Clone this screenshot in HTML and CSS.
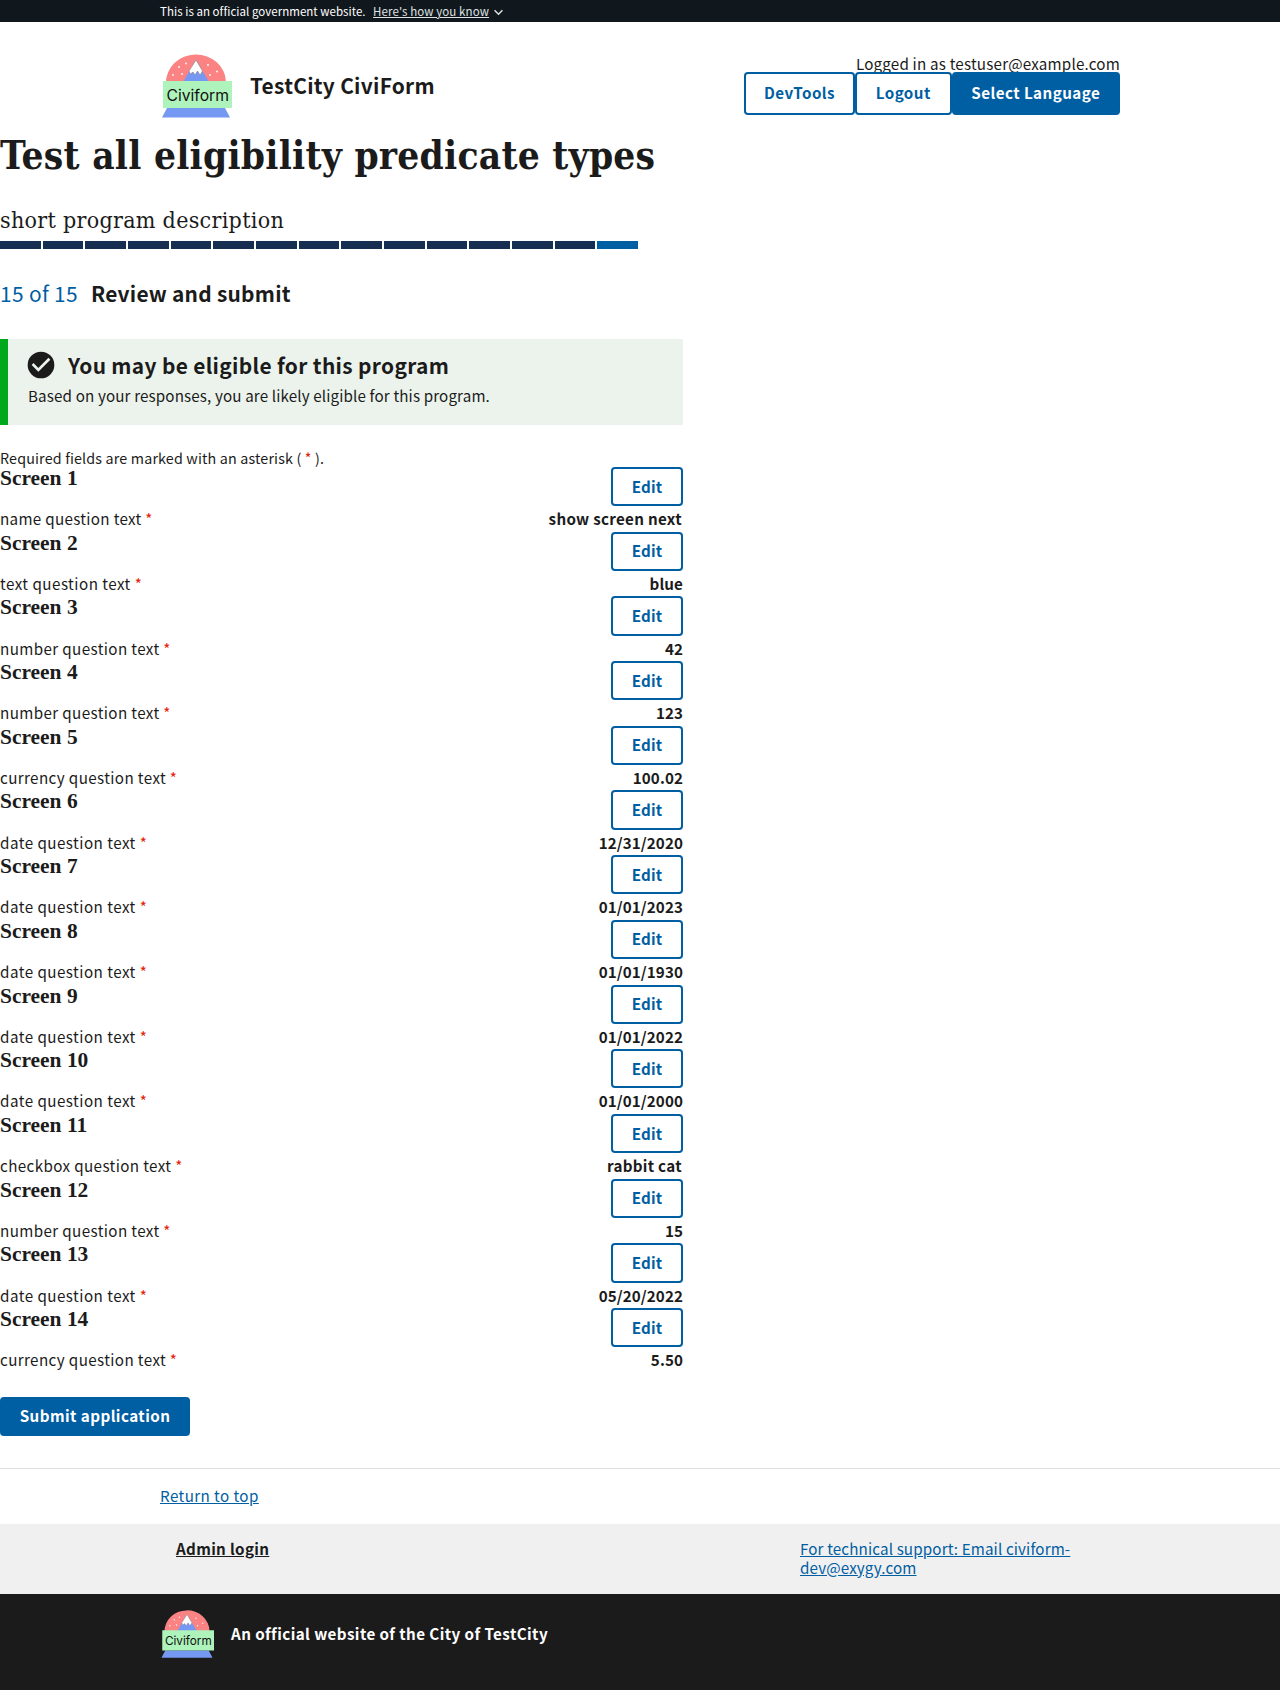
FILE: index.html
```html
<!DOCTYPE html>
<html lang="en">
<head>
<meta charset="utf-8">
<title>Test all eligibility predicate types</title>
<link rel="stylesheet" href="styles.css">
</head>
<body>
<svg width="0" height="0" class="defs" aria-hidden="true">
  <symbol id="logo" viewBox="0 0 72 64">
    <path d="M6 29a30 28 0 0 1 60-1v3H6z" fill="#fb8383"/>
    <path d="M23 28 36 6l13 22z" fill="#7598f2"/>
    <path d="M36 6l6.500 11-2.500 4-2.500-4-2.500 4-2-3-2.500 2-1.500-3z" fill="#fff" stroke="#777" stroke-width=".5"/>
    <g fill="#fff"><circle cx="13" cy="21" r=".9"/><circle cx="19" cy="13" r=".9"/><circle cx="26" cy="9.500" r=".9"/><circle cx="22" cy="20" r=".9"/><circle cx="48" cy="11" r=".9"/><circle cx="57" cy="17.500" r=".9"/><circle cx="50" cy="21" r=".9"/></g>
    <path d="M7 54h58l5 9.500H2z" fill="#7598f2"/>
    <path d="M3 27h69v27H3z" fill="#adf3bb"/>
    <text x="6.500" y="47.300" font-family="Inter, sans-serif" font-size="15.700" font-weight="400" fill="#111" textLength="62.500">Civiform</text>
  </symbol>
</svg>
<div class="banner"><div class="container banner-in"><span class="b1">This is an official government website.</span><a class="b2">Here's how you know</a><svg width="9" height="7" viewBox="0 0 8 6"><path d="M.5 1 4 4.500 7.500 1" fill="none" stroke="#dfe1e2" stroke-width="1.300"/></svg></div></div>
<header class="container header">
  <div class="brand"><svg class="logo" width="72" height="64"><use href="#logo"/></svg><span class="brand-name">TestCity CiviForm</span></div>
  <div class="account"><span class="user">Logged in as testuser@example.com</span>
    <div class="buttons"><a class="btn outline dev">DevTools</a><a class="btn outline out">Logout</a><a class="btn lang">Select Language</a></div></div>
</header>
<main>
  <h1>Test all eligibility predicate types</h1>
  <p class="desc">short program description</p>
  <div class="steps"><i></i><i></i><i></i><i></i><i></i><i></i><i></i><i></i><i></i><i></i><i></i><i></i><i></i><i></i><i class="current"></i></div>
  <h2><span class="count">15 of 15</span><span class="step-name">Review and submit</span></h2>
  <section class="alert">
    <div class="alert-head"><svg width="32" height="32" viewBox="0 0 24 24"><path d="M12 2a10 10 0 1 0 0 20 10 10 0 0 0 0-20zm-2 15-5-5 1.410-1.410L10 14.170l7.590-7.590L19 8z" fill="#1b1b1b"/></svg><span class="alert-title">You may be eligible for this program</span></div>
    <p>Based on your responses, you are likely eligible for this program.</p>
  </section>
  <p class="required">Required fields are marked with an asterisk ( <b class="star">*</b> ).</p>
  <div class="summary">
    <div class="item"><h3>Screen 1</h3><a class="btn outline edit">Edit</a><p class="snug">name question text <b class="star">*</b></p><strong class="words">show screen next</strong></div>
    <div class="item"><h3>Screen 2</h3><a class="btn outline edit">Edit</a><p class="loose">text question text <b class="star">*</b></p><strong>blue</strong></div>
    <div class="item"><h3>Screen 3</h3><a class="btn outline edit">Edit</a><p>number question text <b class="star">*</b></p><strong>42</strong></div>
    <div class="item"><h3>Screen 4</h3><a class="btn outline edit">Edit</a><p>number question text <b class="star">*</b></p><strong>123</strong></div>
    <div class="item"><h3>Screen 5</h3><a class="btn outline edit">Edit</a><p>currency question text <b class="star">*</b></p><strong>100.02</strong></div>
    <div class="item"><h3>Screen 6</h3><a class="btn outline edit">Edit</a><p class="loose">date question text <b class="star">*</b></p><strong>12/31/2020</strong></div>
    <div class="item"><h3>Screen 7</h3><a class="btn outline edit">Edit</a><p class="loose">date question text <b class="star">*</b></p><strong>01/01/2023</strong></div>
    <div class="item"><h3>Screen 8</h3><a class="btn outline edit">Edit</a><p class="loose">date question text <b class="star">*</b></p><strong>01/01/1930</strong></div>
    <div class="item"><h3>Screen 9</h3><a class="btn outline edit">Edit</a><p class="loose">date question text <b class="star">*</b></p><strong>01/01/2022</strong></div>
    <div class="item"><h3>Screen 10</h3><a class="btn outline edit">Edit</a><p class="loose">date question text <b class="star">*</b></p><strong>01/01/2000</strong></div>
    <div class="item"><h3>Screen 11</h3><a class="btn outline edit">Edit</a><p>checkbox question text <b class="star">*</b></p><strong class="words">rabbit cat</strong></div>
    <div class="item"><h3>Screen 12</h3><a class="btn outline edit">Edit</a><p>number question text <b class="star">*</b></p><strong>15</strong></div>
    <div class="item"><h3>Screen 13</h3><a class="btn outline edit">Edit</a><p class="loose">date question text <b class="star">*</b></p><strong>05/20/2022</strong></div>
    <div class="item"><h3>Screen 14</h3><a class="btn outline edit">Edit</a><p>currency question text <b class="star">*</b></p><strong>5.50</strong></div>
  </div>
  <a class="btn submit">Submit application</a>
</main>
<footer>
  <div class="return"><div class="container"><a>Return to top</a></div></div>
  <div class="links"><div class="container links-in"><a class="admin">Admin login</a><a class="support">For technical support: Email civiform-<br>dev@exygy.com</a></div></div>
  <div class="identity"><div class="container identity-in"><svg class="logo" width="54" height="48"><use href="#logo"/></svg><span>An official website of the City of TestCity</span></div></div>
</footer>
</body>
</html>
```
FILE: styles.css
```css
* { box-sizing: border-box; }
body { margin: 0; background: #fff; color: #1b1b1b; font: 15.200px/25.440px "Noto Sans CJK SC", "Open Sans", sans-serif; }
p, h1, h2, h3 { margin: 0; }
.defs { display: block; }
.container { width: 960px; margin: 0 auto; }
.banner { height: 22px; background: #11181d; color: #fff; font-size: 11.500px; line-height: 22px; letter-spacing: .04px; }
.banner-in { display: flex; align-items: center; }
.b2 { margin-left: 7.500px; color: #dfe1e2; text-decoration: underline; letter-spacing: .1px; }
.banner svg { margin-left: 5px; margin-top: 3px; }
.header { height: 111px; padding-top: 32px; display: flex; justify-content: space-between; }
.brand { display: flex; height: 64px; }
.brand-name { margin-left: 18px; font-size: 20.900px; font-weight: 700; line-height: 62px; letter-spacing: .27px; }
.account { display: flex; flex-direction: column; align-items: flex-end; }
.user { height: 18px; line-height: 19px; letter-spacing: .19px; }
.buttons { display: flex; position: relative; background: #fff; }
.btn { display: flex; align-items: center; justify-content: center; height: 39.260px; padding-bottom: 2px; border-radius: 4px; background: #005ea2; color: #fff; font-weight: 700; line-height: 16px; letter-spacing: .44px; white-space: nowrap; }
.buttons .btn { height: 43px; padding-bottom: 3px; }
.outline { background: #fff; box-shadow: inset 0 0 0 2px #005ea2; color: #005ea2; }
.dev { width: 111px; }
.out { width: 96.500px; }
.lang { width: 168.500px; }
h1 { font: 700 38.500px/46px "DejaVu Serif Condensed", "DejaVu Serif", serif; font-stretch: condensed; height: 64px; letter-spacing: .24px; white-space: nowrap; }
.desc { font: 23px/47px "DejaVu Serif Condensed", "DejaVu Serif", serif; font-stretch: condensed; height: 44px; letter-spacing: .3px; }
.steps { display: grid; grid-template-columns: repeat(15, 1fr); width: 640px; height: 8px; }
.steps i { background: #162e51; margin-right: 2px; }
.steps .current { background: #005ea2; }
h2 { display: flex; height: 90px; padding-top: 29px; font-size: 20.900px; line-height: 30px; letter-spacing: .25px; }
.count { width: 91px; font-weight: 400; color: #005ea2; letter-spacing: .34px; }
.alert { width: 683px; height: 86px; padding: 10px 0 0 17px; border-left: 8px solid #00a91c; background: #ecf3ec; }
.alert-head { display: flex; height: 34px; }
.alert-title { margin-left: 11px; font-size: 20.900px; font-weight: 700; line-height: 32px; letter-spacing: .33px; }
.alert p { padding-left: 3px; line-height: 25px; letter-spacing: .13px; }
.required { height: 42px; padding-top: 20px; font-size: 14.300px; line-height: 25px; letter-spacing: .16px; }
.star { color: #e52207; font-weight: 400; }
.item { width: 683px; display: grid; grid-template-columns: 1fr auto; grid-template-rows: 39.260px 25.440px; justify-items: end; }
.item > p { justify-self: start; line-height: 24.600px; letter-spacing: .38px; }
.item > .snug { letter-spacing: .31px; }
.item > .loose { letter-spacing: .47px; }
.item > strong { line-height: 24.600px; letter-spacing: .08px; }
.item > .words { padding-right: 1.200px; letter-spacing: .28px; }
h3 { justify-self: start; font: 700 21.440px/22.800px "Liberation Serif", serif; }
.edit { width: 72px; letter-spacing: .2px; }
.submit { width: 190px; margin: 24px 0 31.700px; }
.return { height: 56px; border-top: 1px solid #dfe1e2; padding-top: 14px; color: #005ea2; letter-spacing: .41px; }
.return a, .links a { text-decoration: underline; }
.links { height: 70px; background: #f0f0f0; padding-top: 15px; }
.links-in { display: flex; line-height: 19px; }
.admin { width: 624px; padding-left: 16px; font-weight: 700; letter-spacing: .33px; }
.support { padding-left: 16px; color: #005ea2; letter-spacing: .13px; }
.identity { height: 96px; background: #1b1b1b; color: #fff; padding-top: 16px; font-weight: 700; }
.identity-in { display: flex; }
.identity span { margin-left: 17px; line-height: 46px; letter-spacing: .42px; }
```
